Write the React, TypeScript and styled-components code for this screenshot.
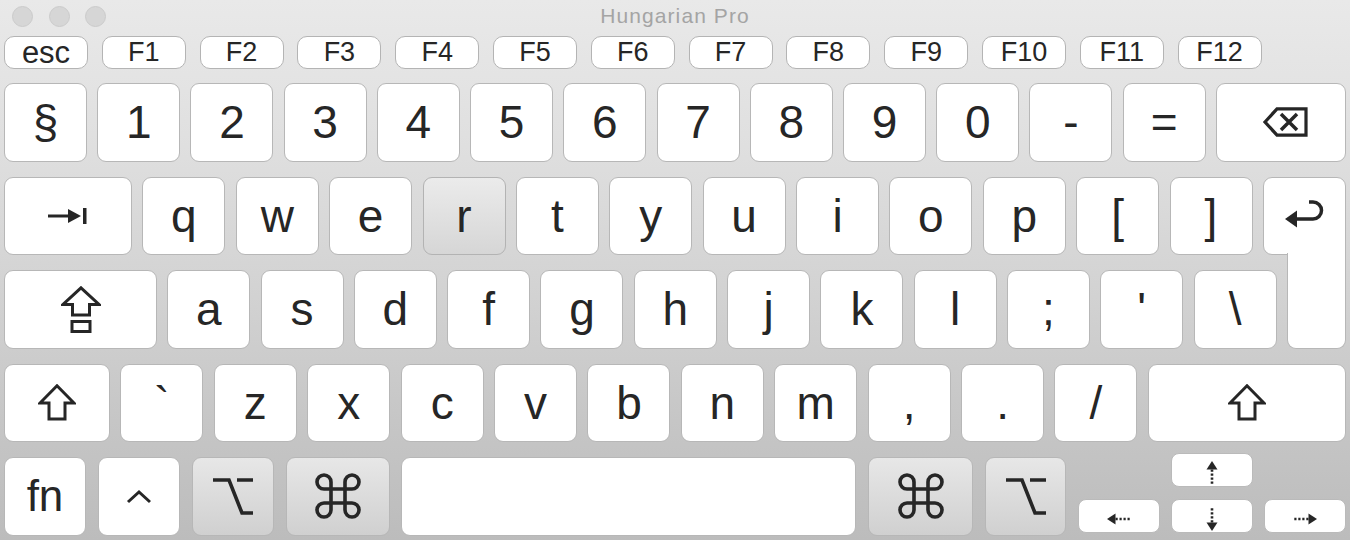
import React from 'react';
import styled, { createGlobalStyle } from 'styled-components';
import { Command } from 'lucide-react';

const GlobalStyle = createGlobalStyle`
  html, body {
    margin: 0;
    padding: 0;
    background: #bdbdbd;
  }
`;

const Window = styled.div`
  width: 1350px;
  height: 540px;
  overflow: hidden;
  box-sizing: border-box;
  background: linear-gradient(#e9e9e9 0%, #e0e0e0 25%, #d2d2d2 55%, #c6c6c6 78%, #bcbcbc 100%);
  font-family: 'Liberation Sans', Arial, sans-serif;
  color: #262626;
`;

const TitleBar = styled.div`
  display: grid;
  grid-template-columns: 1fr auto 1fr;
  align-items: center;
  height: 36px;
  padding: 0 12px 4px;
  box-sizing: border-box;
`;

const Lights = styled.div`
  display: flex;
  gap: 15.5px;
`;

const Light = styled.span`
  width: 21px;
  height: 21px;
  border-radius: 50%;
  box-sizing: border-box;
  background: #d6d6d6;
  border: 1px solid #cbcbcb;
`;

const Title = styled.div`
  font-size: 21px;
  letter-spacing: 1.1px;
  color: #a4a4a4;
`;

const Keyboard = styled.div`
  display: flex;
  flex-direction: column;
  padding: 0 4px;
`;

const FnRow = styled.div`
  display: flex;
  gap: 13.8px;
  height: 33px;
  margin-bottom: 14px;
`;

const Row = styled.div`
  display: flex;
  justify-content: space-between;
  height: 78.5px;
  margin-bottom: 15px;

  &:last-child {
    margin-bottom: 0;
  }
`;

type Tone = 'plain' | 'mod' | 'down';

const backgrounds: Record<Tone, string> = {
  plain: '#ffffff',
  mod: 'linear-gradient(#e7e7e7, #d0d0d0)',
  down: 'linear-gradient(#ebebeb, #d6d6d6)',
};

const FnKey = styled.div<{ $fs?: number }>`
  box-sizing: border-box;
  width: 84px;
  height: 100%;
  display: flex;
  align-items: center;
  justify-content: center;
  background: #ffffff;
  border: 1.5px solid #b4b4b4;
  border-radius: 10px;
  font-size: ${(p) => p.$fs ?? 27}px;
  line-height: 1;
`;

const Key = styled.div<{ $w: number; $tone?: Tone; $fs?: number; $shift?: number }>`
  box-sizing: border-box;
  width: ${(p) => p.$w}px;
  height: 100%;
  flex: none;
  display: flex;
  align-items: center;
  justify-content: center;
  padding-left: ${(p) => p.$shift ?? 0}px;
  background: ${(p) => backgrounds[p.$tone ?? 'plain']};
  border: 1.5px solid ${(p) => (p.$tone === 'down' ? '#b3b3b3' : '#b7b7b7')};
  border-radius: 9px;
  font-size: ${(p) => p.$fs ?? 46}px;
`;

const ReturnTop = styled(Key)`
  border-bottom-right-radius: 0;
  align-items: flex-start;
  padding-top: 21px;
`;

const ReturnBottom = styled.div`
  box-sizing: border-box;
  width: 59px;
  height: 95.5px;
  margin-top: -17px;
  position: relative;
  z-index: 1;
  background: #ffffff;
  border: 1.5px solid #b7b7b7;
  border-top: none;
  border-radius: 0 0 9px 9px;
`;

const ArrowCluster = styled.div`
  display: flex;
  justify-content: space-between;
  align-items: flex-end;
  width: 268px;
  height: 80px;
  margin-top: -4px;
`;

const ArrowCol = styled.div`
  display: flex;
  flex-direction: column;
  justify-content: space-between;
  height: 100%;
`;

const ArrowKey = styled.div`
  box-sizing: border-box;
  width: 82px;
  height: 34px;
  display: flex;
  align-items: center;
  justify-content: center;
  padding-top: 5px;
  background: #ffffff;
  border: 1.5px solid #bababa;
  border-radius: 8px;
`;

const Glyph = styled.svg`
  display: block;
  fill: none;
  stroke: #262626;
`;

const DottedArrow = styled.svg<{ $rot: number }>`
  display: block;
  transform: rotate(${(p) => p.$rot}deg);
`;

const TabIcon = () => (
  <Glyph width="40" height="16" viewBox="0 0 40 16">
    <path d="M0 8H22" strokeWidth="3" />
    <path d="M20 1L33 8L20 15Z" fill="#262626" stroke="none" />
    <rect x="35" y="0" width="3.5" height="16" fill="#262626" stroke="none" />
  </Glyph>
);

const CapsIcon = () => (
  <Glyph width="40" height="47" viewBox="0 0 40 47">
    <path d="M20 1.8L38 18.5H28.5V29H11.5V18.5H2Z" strokeWidth="3" />
    <rect x="11" y="35.5" width="18" height="10" strokeWidth="3" />
  </Glyph>
);

const ShiftIcon = () => (
  <Glyph width="38" height="37" viewBox="0 0 38 37">
    <path d="M19 1.8L36 19H27V35H11V19H2Z" strokeWidth="3" />
  </Glyph>
);

const BackspaceIcon = () => (
  <Glyph width="45" height="30" viewBox="0 0 45 30">
    <path d="M2 15L14 1.8H43V28.2H14Z" strokeWidth="3.2" />
    <path d="M18 7L34 23M34 7L18 23" strokeWidth="3.5" />
  </Glyph>
);

const ReturnIcon = () => (
  <Glyph width="39" height="31" viewBox="0 0 39 31">
    <path d="M0 20L12 11.5V28.5Z" fill="#262626" stroke="none" />
    <path d="M10 20H28A8.5 8.5 0 0 0 28 3H24" strokeWidth="3.5" />
  </Glyph>
);

const CtrlIcon = () => (
  <Glyph width="26" height="15" viewBox="0 0 26 15">
    <path d="M2 13L13 3L24 13" strokeWidth="3" />
  </Glyph>
);

const OptionIcon = () => (
  <Glyph width="42" height="37" viewBox="0 0 42 37">
    <path d="M1 2H17L30 35H41M25 2H41" strokeWidth="3.6" />
  </Glyph>
);

const Arrow = ({ rot }: { rot: number }) => (
  <DottedArrow $rot={rot} width="12" height="24" viewBox="0 0 12 24">
    <path d="M6 0L11.5 8.5H0.5Z" fill="#262626" />
    <path d="M6 8.5V24" stroke="#262626" strokeWidth="2.6" strokeDasharray="2.2 1.8" />
  </DottedArrow>
);

const fnKeys = ['F1', 'F2', 'F3', 'F4', 'F5', 'F6', 'F7', 'F8', 'F9', 'F10', 'F11', 'F12'];
const numberKeys = ['1', '2', '3', '4', '5', '6', '7', '8', '9', '0', '-', '='];
const topKeys = ['q', 'w', 'e', 'r', 't', 'y', 'u', 'i', 'o', 'p', '[', ']'];
const homeKeys = ['a', 's', 'd', 'f', 'g', 'h', 'j', 'k', 'l', ';', "'", '\\'];
const lowKeys = ['`', 'z', 'x', 'c', 'v', 'b', 'n', 'm', ',', '.', '/'];

const App: React.FC = () => {
  return (
    <>
      <GlobalStyle />
      <Window>
        <TitleBar>
          <Lights>
            <Light />
            <Light />
            <Light />
          </Lights>
          <Title>Hungarian Pro</Title>
          <div />
        </TitleBar>
        <Keyboard>
          <FnRow>
            <FnKey $fs={31}>esc</FnKey>
            {fnKeys.map((k) => (
              <FnKey key={k}>{k}</FnKey>
            ))}
          </FnRow>

          <Row>
            <Key $w={83}>§</Key>
            {numberKeys.map((k) => (
              <Key key={k} $w={83}>
                {k}
              </Key>
            ))}
            <Key $w={130} $shift={10}>
              <BackspaceIcon />
            </Key>
          </Row>

          <Row>
            <Key $w={128}>
              <TabIcon />
            </Key>
            {topKeys.map((k) => (
              <Key key={k} $w={83} $tone={k === 'r' ? 'down' : 'plain'}>
                {k}
              </Key>
            ))}
            <ReturnTop $w={83}>
              <ReturnIcon />
            </ReturnTop>
          </Row>

          <Row>
            <Key $w={153}>
              <CapsIcon />
            </Key>
            {homeKeys.map((k) => (
              <Key key={k} $w={83}>
                {k}
              </Key>
            ))}
            <ReturnBottom />
          </Row>

          <Row>
            <Key $w={106}>
              <ShiftIcon />
            </Key>
            {lowKeys.map((k) => (
              <Key key={k} $w={83}>
                {k}
              </Key>
            ))}
            <Key $w={198}>
              <ShiftIcon />
            </Key>
          </Row>

          <Row>
            <Key $w={82} $fs={44}>
              fn
            </Key>
            <Key $w={82}>
              <CtrlIcon />
            </Key>
            <Key $w={82} $tone="mod">
              <OptionIcon />
            </Key>
            <Key $w={104} $tone="mod">
              <Command size={56} strokeWidth={1.55} color="#262626" />
            </Key>
            <Key $w={455} />
            <Key $w={105} $tone="mod">
              <Command size={56} strokeWidth={1.55} color="#262626" />
            </Key>
            <Key $w={81} $tone="mod">
              <OptionIcon />
            </Key>
            <ArrowCluster>
              <ArrowKey>
                <Arrow rot={-90} />
              </ArrowKey>
              <ArrowCol>
                <ArrowKey>
                  <Arrow rot={0} />
                </ArrowKey>
                <ArrowKey>
                  <Arrow rot={180} />
                </ArrowKey>
              </ArrowCol>
              <ArrowKey>
                <Arrow rot={90} />
              </ArrowKey>
            </ArrowCluster>
          </Row>
        </Keyboard>
      </Window>
    </>
  );
};

export default App;
